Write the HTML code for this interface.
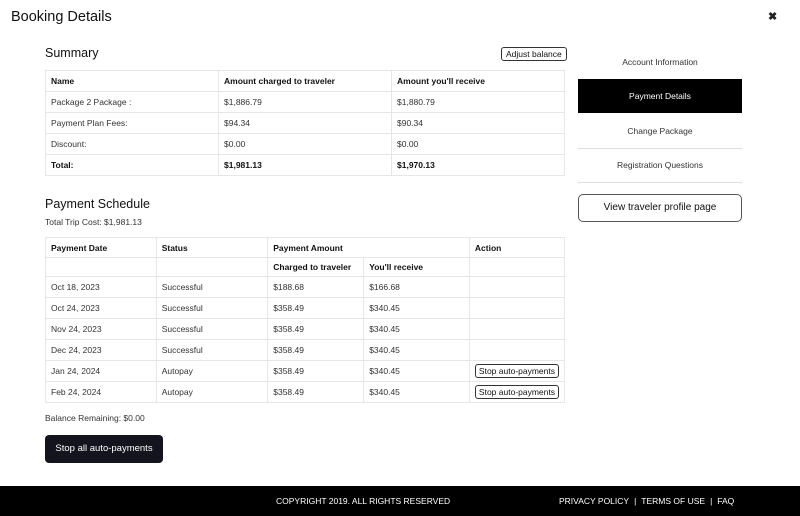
<!DOCTYPE html><html><head><style>
*{margin:0;padding:0;box-sizing:border-box}
body{width:800px;height:516px;background:#fff;font-family:"Liberation Sans",sans-serif;color:#222;position:relative;overflow:hidden}
.a{position:absolute}
table{position:absolute;border-collapse:collapse;font-size:8.5px;color:#333;line-height:10px}
td{border:1px solid #e6e6e6;padding:0 5px;height:21px;vertical-align:middle;white-space:nowrap}
.b td,td.b{font-weight:bold;color:#111}
.btn{border:1px solid #333;border-radius:3px;font-size:8.5px;padding:1px 3px;background:#fff;color:#111;display:inline-block;white-space:nowrap;line-height:10px}
.nav{position:absolute;left:578px;width:164px;text-align:center;font-size:8.5px;color:#333}
.s{margin:0 5px}
</style></head><body>
<div class="a" style="left:11px;top:9px;font-size:14.5px;color:#111">Booking Details</div>
<div class="a" style="left:768px;top:10px;font-size:11px;font-weight:bold">✖</div>
<div class="a" style="left:45px;top:46px;font-size:12.5px;color:#111">Summary</div>
<div class="a btn" style="left:501px;top:47px;padding:1px 4px">Adjust balance</div>
<table style="left:45px;top:70px;width:520px">
<tr class="b"><td style="width:173px">Name</td><td style="width:173px">Amount charged to traveler</td><td>Amount you'll receive</td></tr>
<tr><td>Package 2 Package :</td><td>$1,886.79</td><td>$1,880.79</td></tr>
<tr><td>Payment Plan Fees:</td><td>$94.34</td><td>$90.34</td></tr>
<tr><td>Discount:</td><td>$0.00</td><td>$0.00</td></tr>
<tr class="b"><td>Total:</td><td>$1,981.13</td><td>$1,970.13</td></tr>
</table>
<div class="a" style="left:45px;top:197px;font-size:12.5px;color:#111">Payment Schedule</div>
<div class="a" style="left:45px;top:217px;font-size:8.5px;color:#333">Total Trip Cost: $1,981.13</div>
<table style="left:45px;top:237px;width:520px">
<tr class="b"><td style="width:111px;height:20px">Payment Date</td><td style="width:112px;height:20px">Status</td><td colspan="2" style="height:20px">Payment Amount</td><td style="height:20px">Action</td></tr>
<tr style="height:19px"><td style="height:19px"></td><td style="height:19px"></td><td class="b" style="width:96px;height:19px">Charged to traveler</td><td class="b" style="width:106px;height:19px">You'll receive</td><td style="height:19px"></td></tr>
<tr><td>Oct 18, 2023</td><td>Successful</td><td>$188.68</td><td>$166.68</td><td></td></tr>
<tr><td>Oct 24, 2023</td><td>Successful</td><td>$358.49</td><td>$340.45</td><td></td></tr>
<tr><td>Nov 24, 2023</td><td>Successful</td><td>$358.49</td><td>$340.45</td><td></td></tr>
<tr><td>Dec 24, 2023</td><td>Successful</td><td>$358.49</td><td>$340.45</td><td></td></tr>
<tr><td>Jan 24, 2024</td><td>Autopay</td><td>$358.49</td><td>$340.45</td><td><span class="btn">Stop auto-payments</span></td></tr>
<tr><td>Feb 24, 2024</td><td>Autopay</td><td>$358.49</td><td>$340.45</td><td><span class="btn">Stop auto-payments</span></td></tr>
</table>
<div class="a" style="left:45px;top:413px;font-size:8.5px;color:#333">Balance Remaining: $0.00</div>
<div class="a" style="left:45px;top:435px;width:118px;height:28px;background:#14141f;border-radius:4px;color:#fff;font-size:9.5px;text-align:center;line-height:28px">Stop all auto-payments</div>
<div class="nav" style="top:57px">Account Information</div>
<div class="nav" style="top:79px;height:34px;background:#000;color:#fff;line-height:34px">Payment Details</div>
<div class="nav" style="top:126px">Change Package</div>
<div class="a" style="left:578px;top:148px;width:164px;height:1px;background:#ddd"></div>
<div class="nav" style="top:160px">Registration Questions</div>
<div class="a" style="left:578px;top:182px;width:164px;height:1px;background:#ddd"></div>
<div class="a" style="left:578px;top:194px;width:164px;height:28px;border:1px solid #555;border-radius:5px;text-align:center;line-height:26px;font-size:10px;color:#111">View traveler profile page</div>
<div class="a" style="left:0;top:486px;width:800px;height:30px;background:#000;color:#fff;font-size:8.5px">
<div class="a" style="left:276px;top:10px">COPYRIGHT 2019. ALL RIGHTS RESERVED</div>
<div class="a" style="left:559px;top:10px;white-space:nowrap">PRIVACY POLICY<span class="s">|</span>TERMS OF USE<span class="s">|</span>FAQ</div>
</div>
</body></html>
